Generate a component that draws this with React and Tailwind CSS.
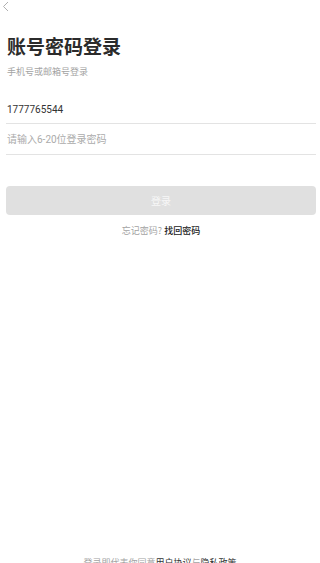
export default function App() {
  return (
    <div
      className="h-[563px] w-[320px] overflow-hidden bg-white flex flex-col"
      style={{ fontFamily: '"Noto Sans CJK SC", "Noto Sans", sans-serif' }}
    >
      <div className="h-[13px] pl-[2px] pt-[1px]">
        <svg width="8" height="11" viewBox="0 0 8 11" fill="none">
          <path d="M6 1 L1.5 5.5 L6 10" stroke="#b0b0b0" strokeWidth="1" />
        </svg>
      </div>
      <div className="px-[7px] pt-[20px]">
        <h1 className="text-[19px] leading-[26px] font-bold text-[#2b2b2b]">账号密码登录</h1>
        <p className="mt-[7px] text-[9px] leading-[12px] text-[#a3a3a3]">手机号或邮箱号登录</p>
      </div>
      <div className="pl-[6px] pr-[4px] pt-[15px]">
        <div className="h-[31px] flex items-center border-b border-[#e3e3e3] pl-[1px] pt-[2px] text-[10px] text-[#333]" style={{ fontFamily: 'Roboto, "Noto Sans CJK SC", sans-serif' }}>
          1777765544
        </div>
        <div className="h-[31px] flex items-center border-b border-[#e3e3e3] pl-[1px] text-[10px] text-[#ababab]" style={{ fontFamily: 'Roboto, "Noto Sans CJK SC", sans-serif' }}>
          请输入6-20位登录密码
        </div>
        <div className="mt-[31px] h-[29px] rounded-[4px] bg-[#e0e0e0] flex items-center justify-center text-[10px] text-[#f7f7f7]">
          登录
        </div>
        <div className="mt-[10px] text-center text-[9px] leading-[12px] text-[#a3a3a3]">
          忘记密码? <span className="text-[#222] font-medium">找回密码</span>
        </div>
      </div>
      <div className="mt-auto mb-[-6px] text-center text-[9px] leading-[12px] text-[#a3a3a3]">
        登录即代表你同意<span className="text-[#333]">用户协议</span>与<span className="text-[#333]">隐私政策</span>
      </div>
    </div>
  );
}
